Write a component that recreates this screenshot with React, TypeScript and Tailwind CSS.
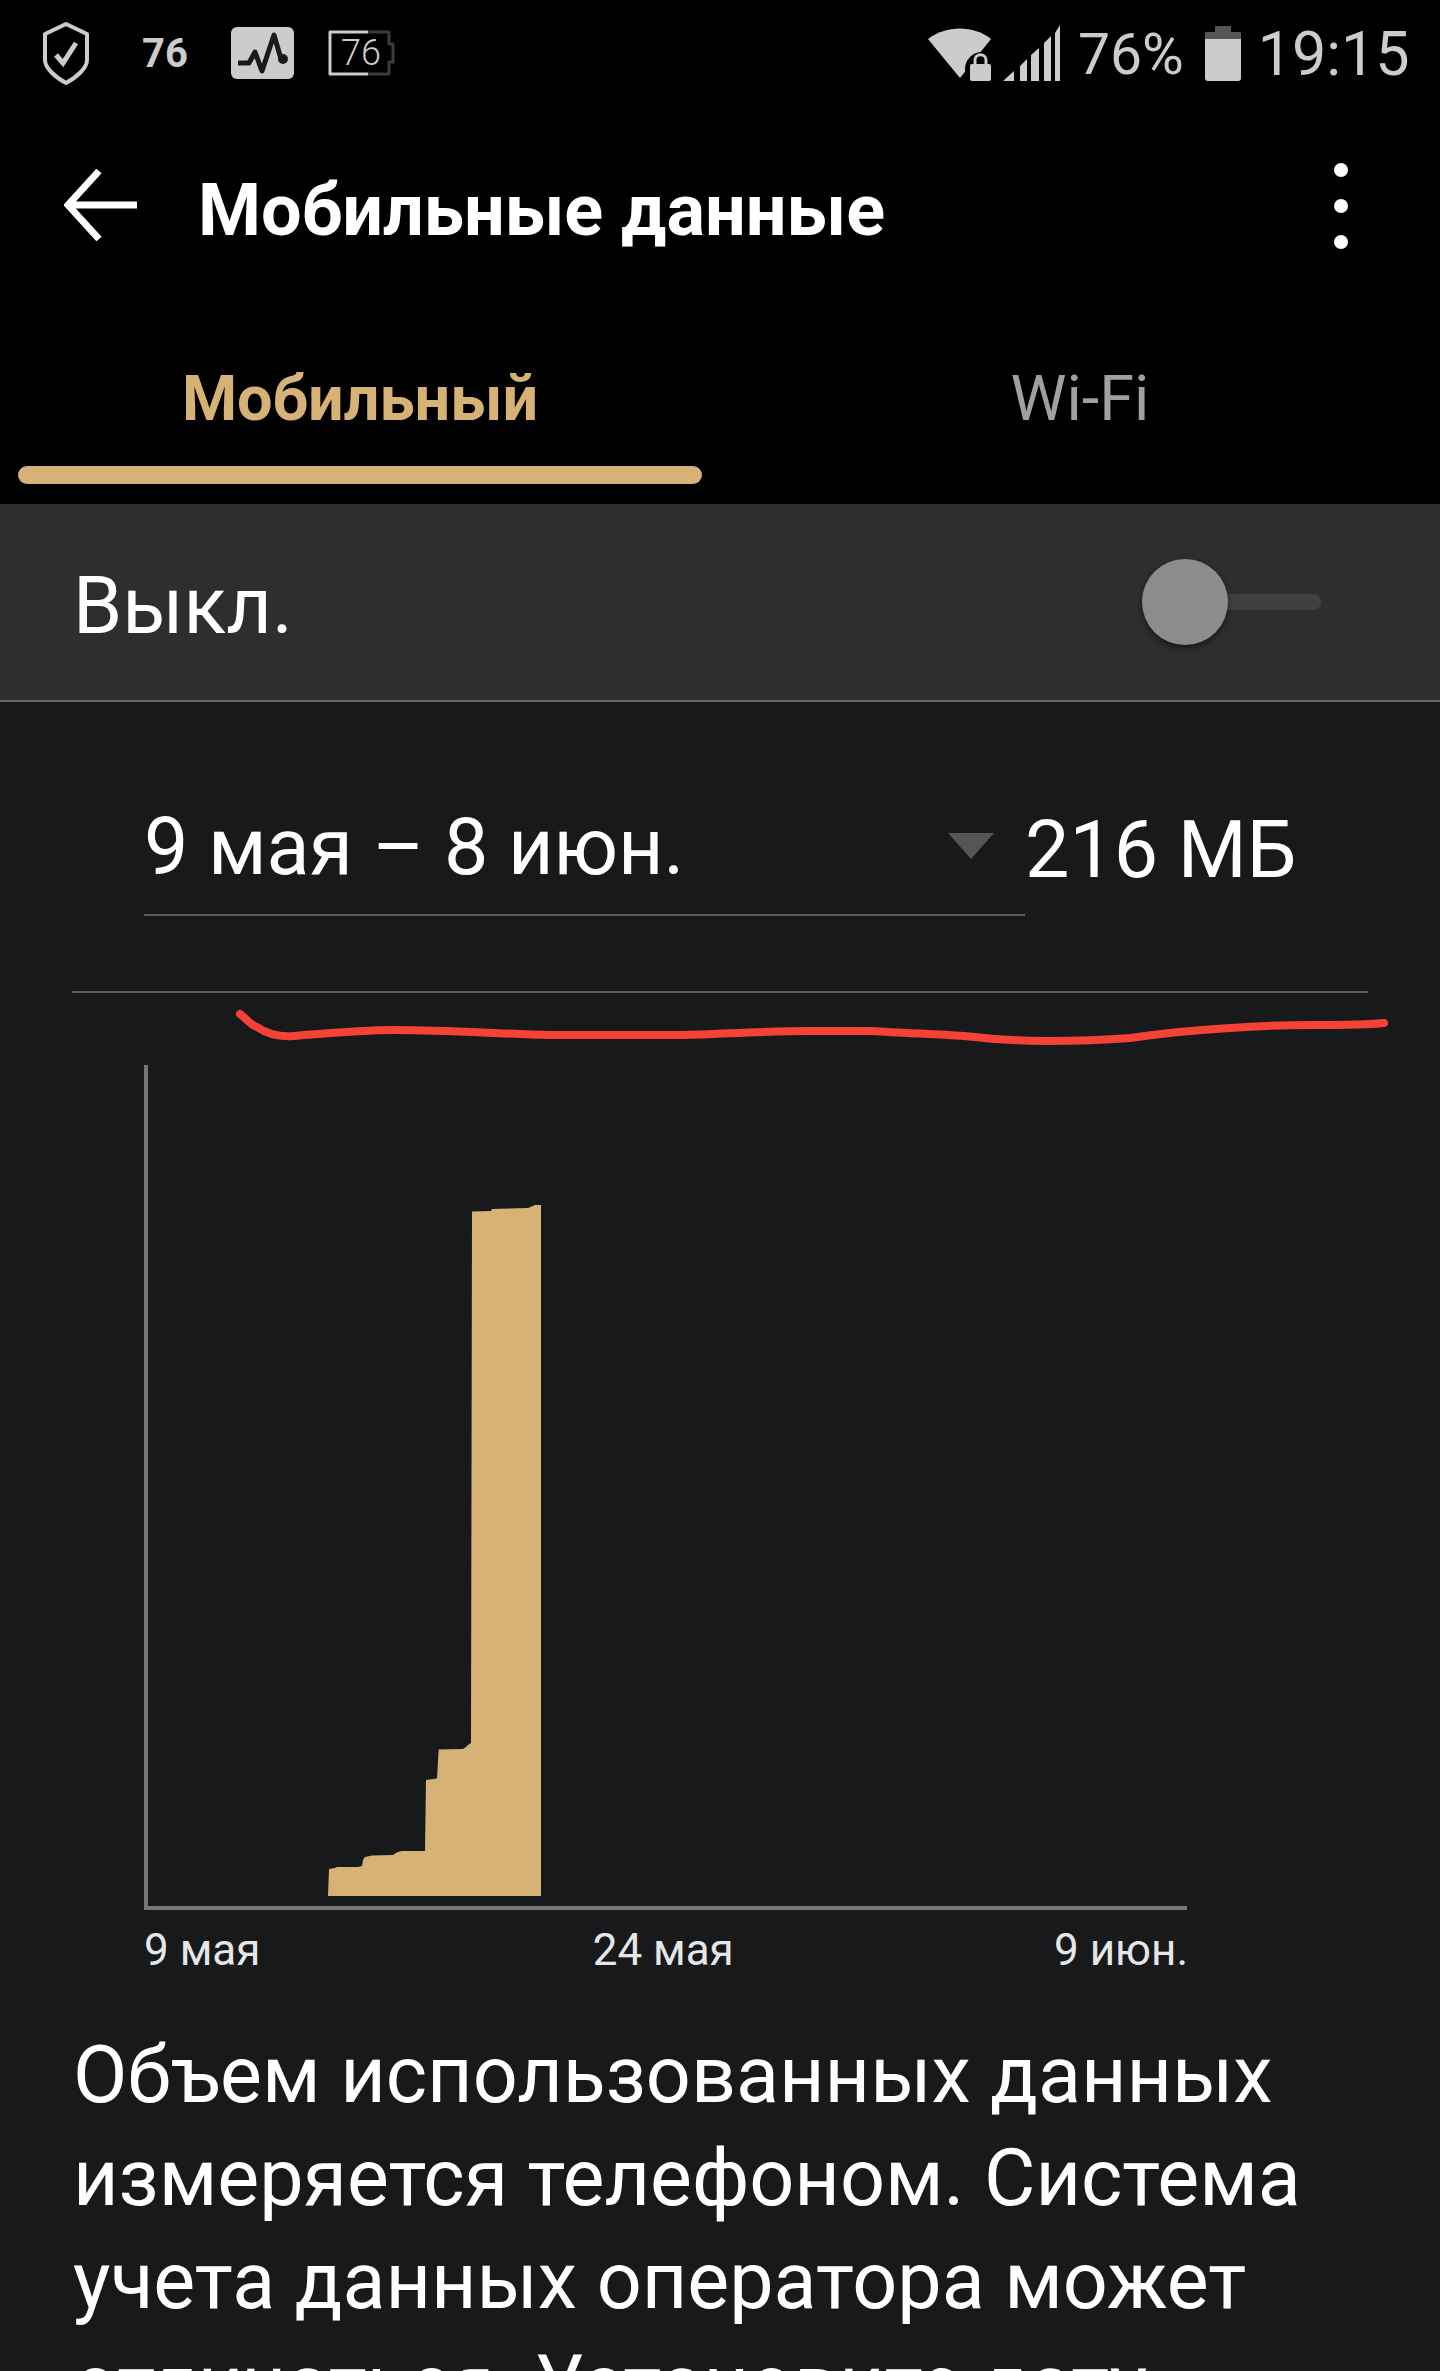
export default function App() {
  return (
    <div className="relative w-[1440px] h-[2371px] overflow-hidden bg-[#18191b] font-['Roboto',sans-serif]">
      <div className="bg-black h-[504px] flex flex-col">
        <div className="h-[108px] flex items-start pl-[43px] text-[#cccccc]">
          <svg width="46" height="64" viewBox="0 0 46 64" className="mt-[22px]" fill="none">
            <path d="M23 2 L44 12 V38 C44 46 34 55 23 61 C12 55 2 46 2 38 V12 Z" stroke="#cccccc" strokeWidth="4" strokeLinejoin="round" />
            <path d="M13 33 L20 41 L33 21" stroke="#cccccc" strokeWidth="5" />
          </svg>
          <span className="ml-[53px] mt-[30px] text-[40px] leading-[48px] font-bold">76</span>
          <svg width="64" height="52" viewBox="0 0 64 52" className="ml-[43px] mt-[27px]">
            <rect width="63" height="52" rx="6" fill="#cccccc" />
            <path d="M7 36 H18 L24 25 L31 44 L43 8 L50 32" fill="none" stroke="#1a1a1a" strokeWidth="5" strokeLinejoin="round" />
            <circle cx="52" cy="32" r="5" fill="#1a1a1a" />
          </svg>
          <div className="relative ml-[32px] mt-[30px] w-[68px] h-[46px]">
            <svg width="68" height="46" viewBox="0 0 68 46" className="absolute inset-0" fill="none">
              <path d="M41 2 H62 V14 H66 V32 H62 V44 H41" stroke="#3c3c3c" strokeWidth="3" strokeLinejoin="round" />
              <path d="M41 2 H3 V44 H41" stroke="#cccccc" strokeWidth="3" strokeLinejoin="round" />
            </svg>
            <span className="absolute left-[14px] top-[2px] text-[36px] leading-[42px] font-light">76</span>
          </div>
          <svg width="64" height="56" viewBox="0 0 64 56" className="ml-[533px] mt-[27px]">
            <path d="M0 12 C18 -2 46 -2 63 12 L32 51 Z" fill="#cccccc" />
            <circle cx="54" cy="42" r="17" fill="#000000" />
            <rect x="42" y="37" width="21" height="17" rx="2" fill="#cccccc" />
            <path d="M47 38 V33 C47 26 58 26 58 33 V38" fill="none" stroke="#cccccc" strokeWidth="3" />
          </svg>
          <svg width="58" height="58" viewBox="0 0 58 58" className="ml-[11px] mt-[24px]">
            <path d="M0 57 L11 47 V57 Z M17 57 V42 L24 35 V57 Z M28 57 V31 L36 24 V57 Z M41 57 V19 L48 12 V57 Z M52 57 V9 L57 1 V57 Z" fill="#cccccc" />
          </svg>
          <span className="ml-[17px] mt-[21px] text-[57px] leading-[67px]">76%</span>
          <svg width="36" height="56" viewBox="0 0 36 56" className="ml-[21px] mt-[26px]">
            <path d="M10 0 H26 V6 H36 V13 H0 V6 H10 Z" fill="#555555" />
            <path d="M0 13 H36 V52 C36 54 35 55 33 55 H3 C1 55 0 54 0 52 Z" fill="#cccccc" />
          </svg>
          <span className="ml-[17px] mt-[20px] text-[61px] leading-[69px]">19:15</span>
        </div>
        <div className="h-[256px] flex pl-[64px] pr-[92px] items-start justify-between">
          <div className="flex items-start">
            <svg width="74" height="72" viewBox="0 0 74 72" fill="none" className="mt-[61px]">
              <path d="M73 36 H5 M35 2 L4 36 L35 70" stroke="#ffffff" strokeWidth="7" />
            </svg>
            <span className="ml-[60px] mt-[61px] text-[72px] leading-[84px] font-bold text-white">Мобильные данные</span>
          </div>
          <div className="flex flex-col gap-[22px] mt-[55px]">
            <div className="w-[14px] h-[14px] rounded-full bg-white" />
            <div className="w-[14px] h-[14px] rounded-full bg-white" />
            <div className="w-[14px] h-[14px] rounded-full bg-white" />
          </div>
        </div>
        <div className="flex h-[140px]">
          <div className="w-[720px] pl-[18px] pr-[18px]">
            <div className="text-[#d7b277] text-[63px] leading-[74px] font-bold text-center mt-[-2px]">Мобильный</div>
            <div className="h-[18px] w-[684px] mt-[30px] rounded-full bg-[#d7b277]" />
          </div>
          <div className="w-[720px] text-center text-[#a0a0a0] text-[63px] leading-[74px] mt-[-2px]">Wi-Fi</div>
        </div>
      </div>
      <div className="h-[198px] bg-[#2d2e30] border-b-2 border-[#666666] flex items-center justify-between pl-[73px] pr-[119px]">
        <span className="text-white text-[79px] leading-[92px] mt-[8px]">Выкл.</span>
        <div className="relative h-[16px] w-[179px]">
          <div className="absolute left-0 right-0 top-0 h-[16px] rounded-full bg-[#404040]" />
          <div className="absolute left-0 top-[-35px] w-[86px] h-[86px] rounded-full bg-[#8c8c8c] shadow-[0_3px_6px_rgba(0,0,0,0.5)]" />
        </div>
      </div>
      <div className="flex pl-[144px] h-[215px]">
        <div className="w-[881px] h-[214px] border-b-2 border-[#5a5a5a] flex items-start justify-between pr-[31px]">
          <span className="text-white text-[79px] leading-[92px] mt-[99px]">9 мая – 8 июн.</span>
          <svg width="46" height="26" viewBox="0 0 46 26" className="mt-[131px]">
            <path d="M0 0 H46 L23 26 Z" fill="#555555" />
          </svg>
        </div>
        <span className="text-white text-[79px] leading-[92px] mt-[102px]">216 МБ</span>
      </div>
      <div className="mx-[72px] mt-[74px] h-[2px] bg-[#5a5a5a]" />
      <div className="ml-[144px] mt-[72px] w-[1044px]">
        <svg width="1044" height="845" viewBox="144 1065 1044 845" className="block">
          <path d="M146 1065 V1908" stroke="#777777" strokeWidth="4" fill="none" />
          <path d="M144 1908 H1187" stroke="#777777" strokeWidth="4" fill="none" />
          <path
            d="M328 1896 L329 1869 L335 1868 L337 1867 L358 1867 L362 1866 L363 1860 L365 1857 L372 1855.5 L393 1855 L396 1853 L398 1852 L402 1851 L425 1851 L426 1780 L437 1778.5 L438.7 1749.5 L463 1749 L466 1747 L468 1745 L471 1743 L472 1211.5 L491 1211 L492 1209 L528 1208 L533 1206 L535 1205 L541 1205 L541 1896 Z"
            fill="#d7b277"
          />
        </svg>
        <div className="flex justify-between text-[#e6e6e6] text-[44px] leading-[52px] mt-[14px]">
          <span>9 мая</span>
          <span className="ml-[12px]">24 мая</span>
          <span>9 июн.</span>
        </div>
      </div>
      <p className="mx-[73px] mt-[48px] w-[1320px] text-white text-[79px] leading-[103px]">
        Объем использованных данных измеряется телефоном. Система учета данных оператора может отличаться. Установите дату
      </p>
      <svg width="1440" height="60" viewBox="0 1000 1440 60" className="absolute left-0 top-[1000px]" fill="none">
        <path
          d="M240 1014 C246 1018 250 1025 257 1027 C270 1036 282 1037 294 1036 C330 1033 360 1030 395 1030 C450 1030 500 1034 551 1035 L680 1035 C720 1034 770 1031 808 1031 L872 1031 C900 1033 935 1034 964 1036 C990 1039 1020 1041 1047 1041 C1075 1041 1105 1040 1130 1038 C1165 1033 1195 1030 1230 1028 C1260 1026 1285 1025 1313 1025 C1340 1025 1365 1025 1384 1023"
          stroke="#f44336"
          strokeWidth="8"
          strokeLinecap="round"
        />
      </svg>
    </div>
  );
}
